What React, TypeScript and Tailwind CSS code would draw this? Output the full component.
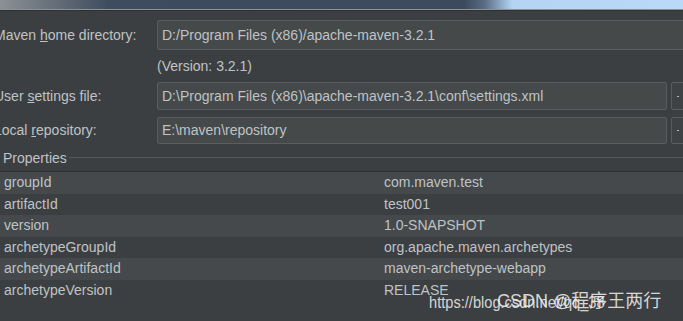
const font = "font-['Liberation_Sans',Arial,sans-serif]";

const props: [string, string][] = [
  ["groupId", "com.maven.test"],
  ["artifactId", "test001"],
  ["version", "1.0-SNAPSHOT"],
  ["archetypeGroupId", "org.apache.maven.archetypes"],
  ["archetypeArtifactId", "maven-archetype-webapp"],
  ["archetypeVersion", "RELEASE"],
];

function Field({ value, button, wide }: { value: string; button?: boolean; wide?: boolean }) {
  return (
    <div className="flex items-stretch gap-[4px] h-full">
      <div
        className={`${wide ? "w-[560px]" : "w-[510px]"} shrink-0 flex items-center pl-[4px] bg-[#45494a] border border-[#5a5d5f] rounded-[2px] whitespace-nowrap`}
      >
        {value}
      </div>
      {button && (
        <div className="w-[20px] shrink-0 flex items-center justify-center bg-[#3f4244] border border-[#5a5d5f] rounded-[2px]">
          <span className="w-[2px] h-[1px] bg-[#bbbbbb] -ml-[6px]" />
        </div>
      )}
    </div>
  );
}

export default function App() {
  return (
    <div className={`w-[683px] h-[321px] overflow-hidden relative bg-[#3c3f41] text-[#bfc3c6] text-[14px] ${font}`}>
      <div className="h-[9px] bg-[linear-gradient(90deg,#8a9096_0%,#5c6672_10%,#3e4c60_16%,#3c4a5e_68%,#5a6e86_71%,#b4d4f4_75%,#bad9f8_100%)]" />
      <div className="h-px bg-[#8d9296]" />
      <div className="h-px bg-[#2f3133]" />

      <div className="-ml-[6px] mt-[9px] flex flex-col">
        <div className="flex h-[30px] items-center">
          <div className="w-[163px] shrink-0 whitespace-nowrap">
            Maven <span className="underline">h</span>ome directory:
          </div>
          <Field value="D:/Program Files (x86)/apache-maven-3.2.1" wide />
        </div>
        <div className="h-[32px] flex items-center pl-[163px]">(Version: 3.2.1)</div>
        <div className="flex h-[28px] items-center">
          <div className="w-[163px] shrink-0 whitespace-nowrap">
            User <span className="underline">s</span>ettings file:
          </div>
          <Field value="D:\Program Files (x86)\apache-maven-3.2.1\conf\settings.xml" button />
        </div>
        <div className="h-[7px]" />
        <div className="flex h-[27px] items-center">
          <div className="w-[163px] shrink-0 whitespace-nowrap">
            Local <span className="underline">r</span>epository:
          </div>
          <Field value="E:\maven\repository" button />
        </div>
      </div>

      <div className="mt-[6px] flex items-center h-[16px] pl-[3px]">
        <span>Properties</span>
        <div className="flex-1 h-px bg-[#55595b] ml-[2px] mt-[-2px]" />
      </div>
      <div className="mt-[5px] h-px bg-[#2e3032]" />
      <div>
        {props.map(([k, v], i) => (
          <div key={k} className={`h-[21.5px] flex items-center ${i % 2 === 0 ? "bg-[#45494b]" : "bg-[#3c3f41]"}`}>
            <div className="w-[384px] pl-[4px] shrink-0">{k}</div>
            <div>{v}</div>
          </div>
        ))}
      </div>

      <div className="absolute left-[429px] top-[290px] text-[17px] text-[#e6e6e6]/90 font-['Liberation_Sans',sans-serif] whitespace-nowrap">
        <span className="inline-block origin-left scale-x-[0.86]">https://blog.csdn.net/qq_38</span>
      </div>
      <div className="absolute left-[497px] top-[288px] text-[18px] text-[#f2f2f2]/85 font-['Liberation_Sans','Noto_Sans_CJK_SC',sans-serif] whitespace-nowrap">
        CSDN @程序王两行
      </div>
    </div>
  );
}
